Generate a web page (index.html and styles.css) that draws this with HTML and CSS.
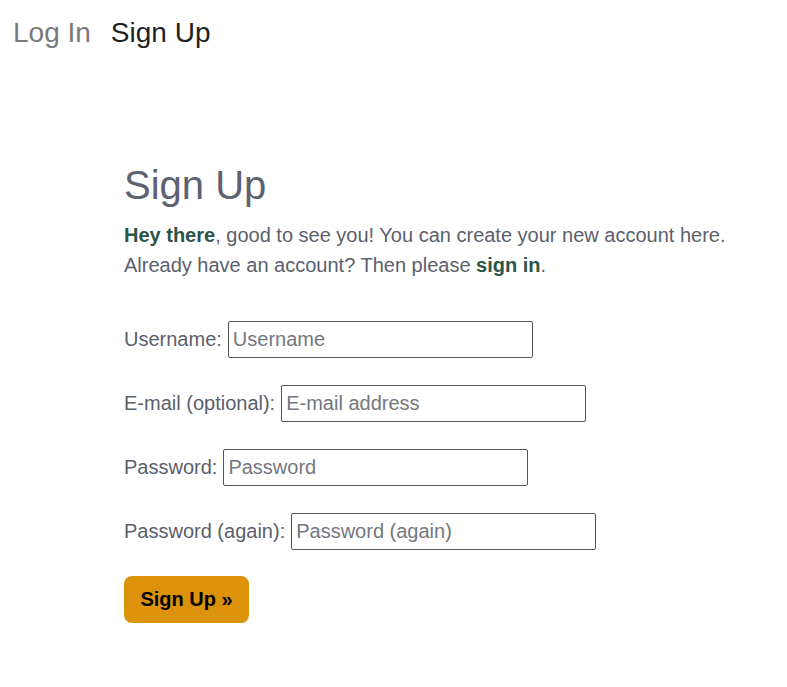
FILE: index.html
```html
<!DOCTYPE html>
<html>
<head>
<meta charset="utf-8">
<link rel="stylesheet" href="styles.css">
</head>
<body>
<nav class="nav">
  <a class="nav-link muted" href="#">Log In</a>
  <a class="nav-link active" href="#">Sign Up</a>
</nav>
<main class="content">
  <h1 class="title">Sign Up</h1>
  <p class="intro"><strong class="hl">Hey there</strong>, good to see you! You can create your new account here.<br>Already have an account? Then please <a class="hl" href="#">sign in</a>.</p>
  <form class="form">
    <div class="row"><label>Username:</label> <input type="text" placeholder="Username"></div>
    <div class="row"><label>E-mail (optional):</label> <input type="text" placeholder="E-mail address"></div>
    <div class="row"><label>Password:</label> <input type="password" placeholder="Password"></div>
    <div class="row"><label>Password (again):</label> <input type="password" placeholder="Password (again)"></div>
    <button class="btn" type="button">Sign Up »</button>
  </form>
</main>
</body>
</html>
```
FILE: styles.css
```css
html, body { margin: 0; padding: 0; background: #fff; }
body { font-family: "Liberation Sans", Arial, sans-serif; color: #5b606c; }
.nav { display: flex; gap: 20px; padding: 17px 13px 0; }
.nav-link { font-size: 28px; line-height: 32px; text-decoration: none; }
.nav-link.muted { color: #7a7a7a; }
.nav-link.active { color: #1f1f1f; }
.content { padding: 113px 0 0 124px; }
.title { font-size: 40px; font-weight: normal; line-height: 46px; margin: 0 0 12px; color: #5d6170; }
.intro { font-size: 20px; line-height: 30px; margin: 0 0 41px; }
.hl { color: #2c5549; font-weight: bold; text-decoration: none; }
.form { display: flex; flex-direction: column; align-items: flex-start; gap: 27px; }
.row { display: flex; align-items: center; gap: 6px; font-size: 20px; }
.row input { width: 305px; height: 37px; box-sizing: border-box; border: 1px solid #555; border-radius: 2px; padding: 0 4px; font: 20px "Liberation Sans", Arial, sans-serif; color: #333; }
.row input::placeholder { color: #737780; }
.btn { width: 125px; height: 47px; border: none; border-radius: 8px; background: #dc920a; color: #000; font: bold 20px "Liberation Sans", Arial, sans-serif; margin-top: -1px; }
```
